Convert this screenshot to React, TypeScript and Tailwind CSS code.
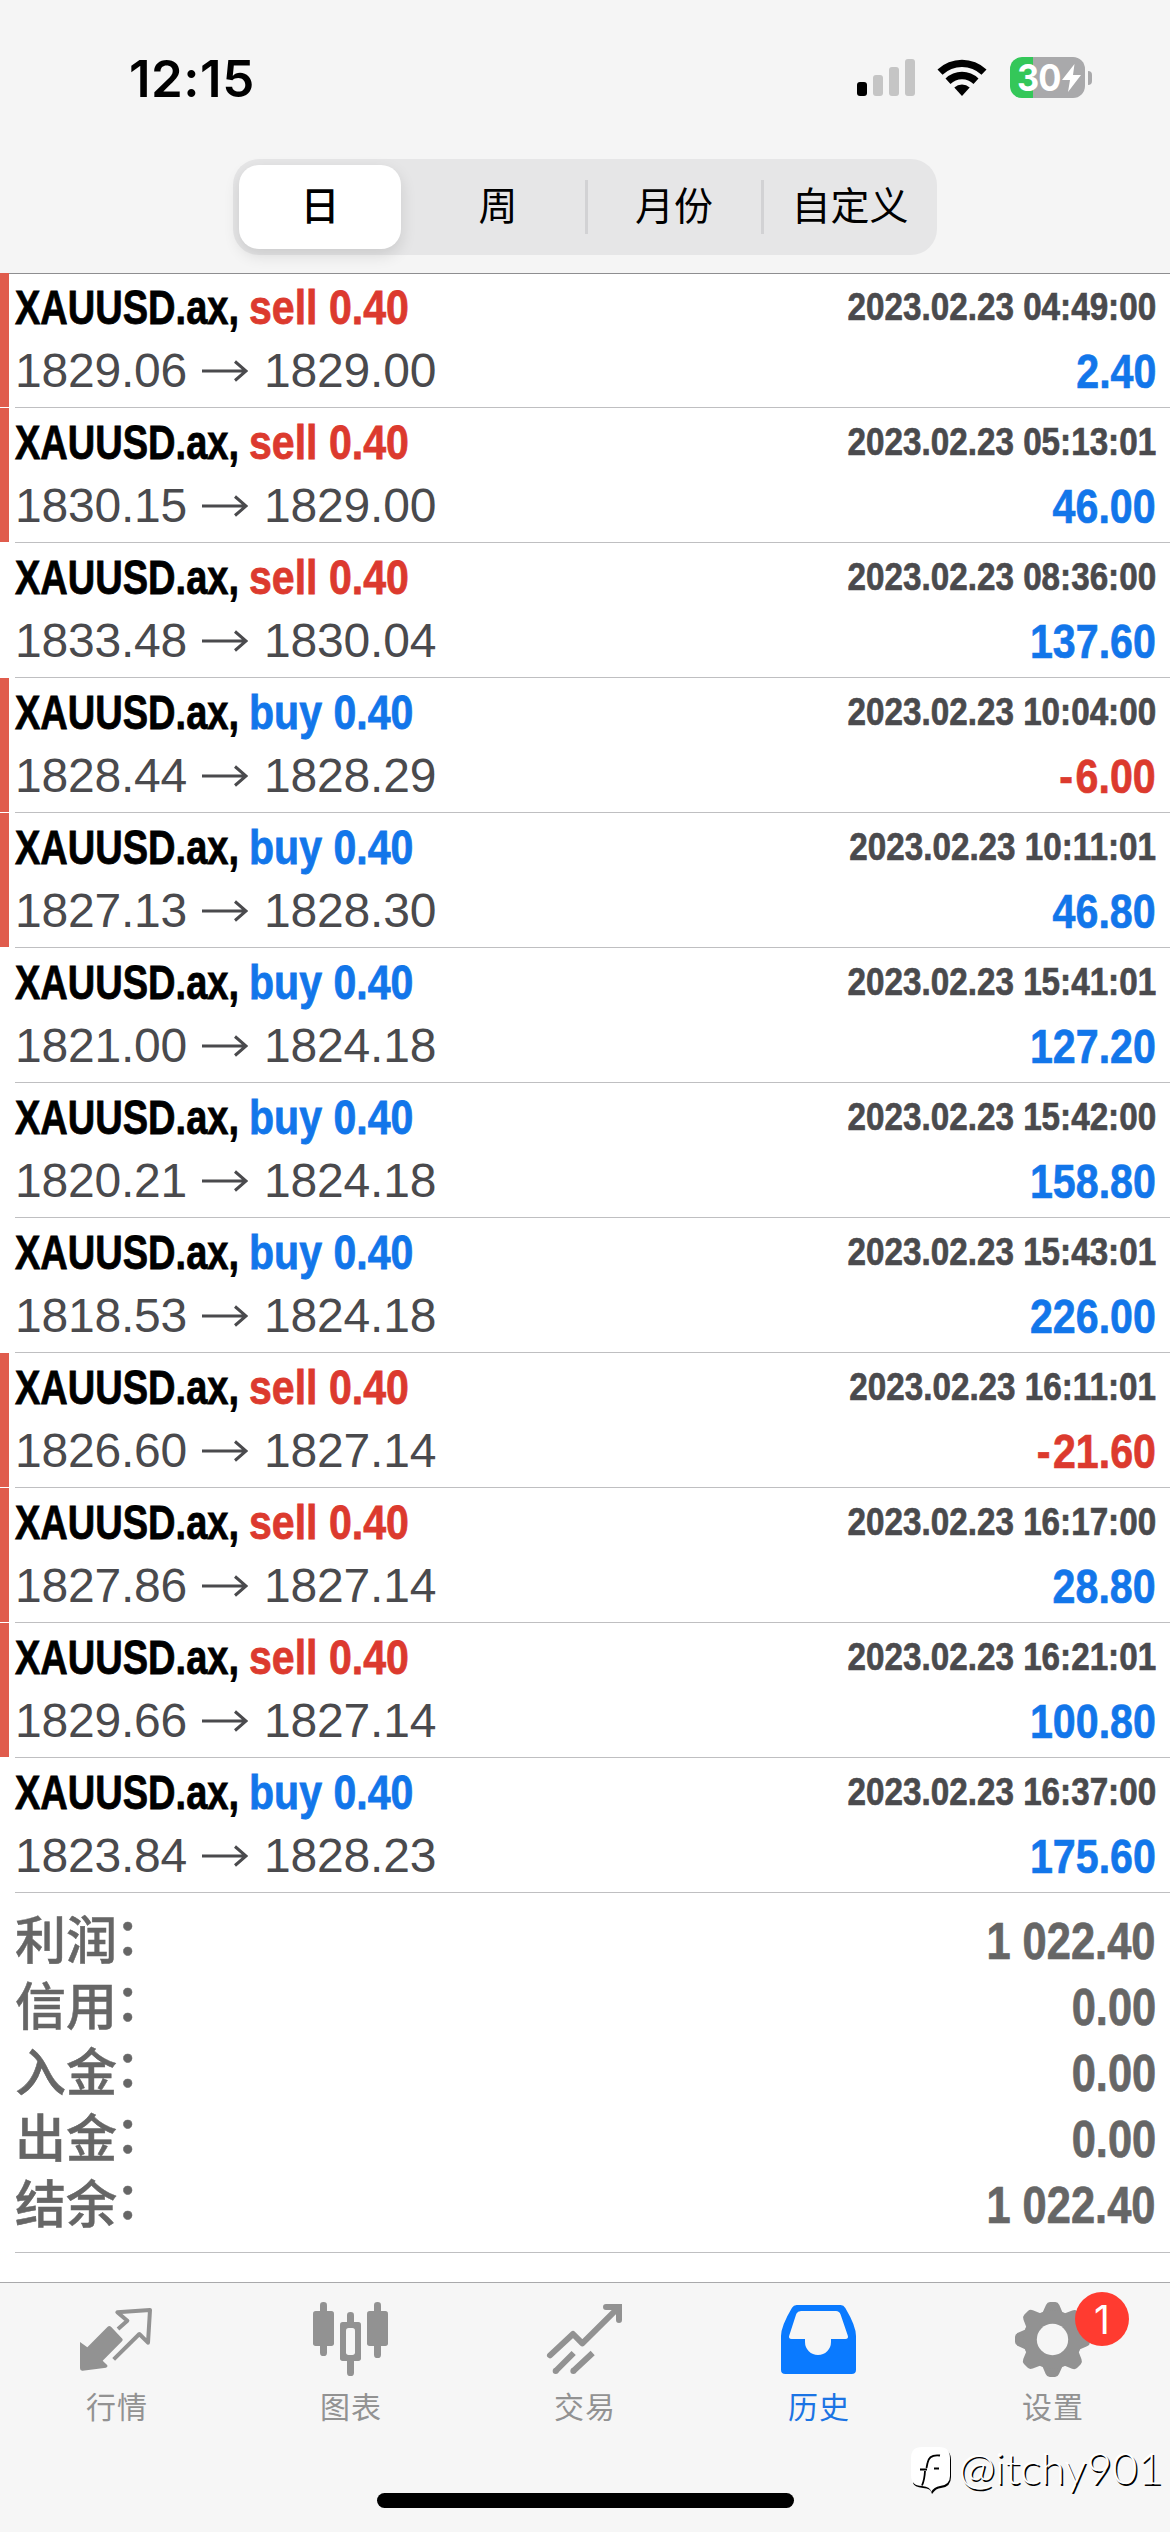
import React from 'react';

type Deal = {
  side: 'sell' | 'buy';
  open: string;
  close: string;
  time: string;
  profit: string;
  marked?: boolean;
};

const deals: Deal[] = [
  { side: 'sell', open: '1829.06', close: '1829.00', time: '2023.02.23 04:49:00', profit: '2.40', marked: true },
  { side: 'sell', open: '1830.15', close: '1829.00', time: '2023.02.23 05:13:01', profit: '46.00', marked: true },
  { side: 'sell', open: '1833.48', close: '1830.04', time: '2023.02.23 08:36:00', profit: '137.60' },
  { side: 'buy', open: '1828.44', close: '1828.29', time: '2023.02.23 10:04:00', profit: '-6.00', marked: true },
  { side: 'buy', open: '1827.13', close: '1828.30', time: '2023.02.23 10:11:01', profit: '46.80', marked: true },
  { side: 'buy', open: '1821.00', close: '1824.18', time: '2023.02.23 15:41:01', profit: '127.20' },
  { side: 'buy', open: '1820.21', close: '1824.18', time: '2023.02.23 15:42:00', profit: '158.80' },
  { side: 'buy', open: '1818.53', close: '1824.18', time: '2023.02.23 15:43:01', profit: '226.00' },
  { side: 'sell', open: '1826.60', close: '1827.14', time: '2023.02.23 16:11:01', profit: '-21.60', marked: true },
  { side: 'sell', open: '1827.86', close: '1827.14', time: '2023.02.23 16:17:00', profit: '28.80', marked: true },
  { side: 'sell', open: '1829.66', close: '1827.14', time: '2023.02.23 16:21:01', profit: '100.80', marked: true },
  { side: 'buy', open: '1823.84', close: '1828.23', time: '2023.02.23 16:37:00', profit: '175.60' },
];

const totals = [
  { label: '利润', value: '1 022.40' },
  { label: '信用', value: '0.00' },
  { label: '入金', value: '0.00' },
  { label: '出金', value: '0.00' },
  { label: '结余', value: '1 022.40' },
];

const periods = ['日', '周', '月份', '自定义'];

const StatusBar = () => (
  <div className="flex h-[159px] items-start justify-between pl-[129px] pr-[78px]">
    <span className="mt-[48px] font-['Inter',sans-serif] text-[51px] font-semibold leading-[62px] tracking-[0.5px] text-black">12:15</span>
    <div className="mt-[57px] flex items-start">
      <svg className="mr-[22px] mt-[2px]" width="58" height="37" viewBox="0 0 58 37">
        <rect x="0" y="23" width="10" height="14" rx="3" fill="#000" />
        <rect x="16" y="16" width="10" height="21" rx="3" fill="#c5c5c5" />
        <rect x="32" y="8" width="10" height="29" rx="3" fill="#c5c5c5" />
        <rect x="48" y="0" width="10" height="37" rx="3" fill="#c5c5c5" />
      </svg>
      <svg className="mr-[23px] mt-[2px]" width="50" height="37" viewBox="0 0 50 37">
        <path d="M0.5 10.500a35.500 35.500 0 0 1 49 0L44.500 15.800a28.500 28.500 0 0 0-39 0z" fill="#000" />
        <path d="M8.500 19.500a23.700 23.700 0 0 1 33 0l-5 5.400a16.500 16.500 0 0 0-23 0z" fill="#000" />
        <path d="M17.3 28.6a11.4 11.4 0 0 1 15.4 0L25 37z" fill="#000" />
      </svg>
      <div className="flex items-center">
        <div className="relative flex h-[41px] w-[75px] items-center rounded-[12px] bg-[linear-gradient(90deg,#34c759_23px,#a9a9ab_23px)] pl-[7px]">
          <span className="origin-left scale-x-[0.93] font-['Inter',sans-serif] text-[37px] font-bold leading-[41px] tracking-[-1px] text-white">30</span>
          <svg className="absolute left-[52px] top-[7px]" width="19" height="28" viewBox="0 0 19 28">
            <path d="M12.5 0L0 16h8L6 28 19 11h-8z" fill="#fff" />
          </svg>
        </div>
        <div className="ml-[3px] h-[14px] w-[4px] rounded-r-full bg-[#a9a9ab]" />
      </div>
    </div>
  </div>
);

const PeriodTabs = () => (
  <div className="mx-auto flex h-24 w-[704px] items-center rounded-[26px] bg-[#e6e6e7]">
    {periods.map((period, i) => (
      <div key={period} className="flex h-full flex-1 items-center">
        <div
          className={
            i === 0
              ? 'ml-[6px] flex h-[84px] w-[162px] items-center justify-center rounded-[20px] bg-white text-[39px] font-medium text-black shadow-[0_6px_16px_rgba(0,0,0,0.12)]'
              : 'flex flex-1 items-center justify-center pl-[2px] text-[39px] text-black'
          }
        >
          {period}
        </div>
        {(i === 1 || i === 2) && <div className="-mr-[3px] h-[54px] w-[3px] bg-[#d2d2d4]" />}
      </div>
    ))}
  </div>
);

const DealRow = ({ deal }: { deal: Deal }) => (
  <div className="flex h-[135px]">
    <div className={`h-[134px] w-[9px] ${deal.marked ? 'bg-[#e05c4d]' : ''}`} />
    <div className="ml-[6px] flex flex-1 justify-between border-b border-[#bfbfc1] pr-[14px]">
      <div className="pt-[3px]">
        <div className="flex h-[62px] whitespace-nowrap text-[49px] font-bold leading-[62px] [-webkit-text-stroke:0.8px]">
          <div className="w-[234px]">
            <span className="inline-block origin-left scale-x-[0.776] text-black">XAUUSD.ax,</span>
          </div>
          <span className={`inline-block origin-left scale-x-[0.838] ${deal.side === 'sell' ? 'text-[#dc3a2e]' : 'text-[#1276ea]'}`}>
            {deal.side} 0.40
          </span>
        </div>
        <div className="mt-[2px] flex h-[62px] items-center text-[48px] leading-[62px] tracking-[-0.2px] text-[#4a4a4d]">
          <span>{deal.open}</span>
          <svg className="ml-[15px] mr-[16px]" width="46" height="22" viewBox="0 0 46 22" fill="none" stroke="#4a4a4d" strokeWidth="3">
            <path d="M0 11h44M33 1.500l11 9.500l-11 9.500" />
          </svg>
          <span>{deal.close}</span>
        </div>
      </div>
      <div className="flex flex-col items-end whitespace-nowrap pt-[3px] font-bold [-webkit-text-stroke:0.7px]">
        <span className="origin-right scale-x-[0.852] text-[39px] leading-[62px] text-[#4a4a4d]">{deal.time}</span>
        <span className={`mt-[2px] origin-right scale-x-[0.84] text-[49px] leading-[62px] ${deal.profit.startsWith('-') ? 'text-[#dc3a2e]' : 'text-[#1276ea]'}`}>
          {deal.profit.startsWith('-') ? (
            <>
              <span className="mr-[3px]">-</span>
              {deal.profit.slice(1)}
            </>
          ) : (
            deal.profit
          )}
        </span>
      </div>
    </div>
  </div>
);

const Totals = () => (
  <div className="ml-[15px] h-[360px] border-b border-[#bfbfc1] pr-[14px] pt-[16px] font-bold text-[#666]">
    {totals.map(({ label, value }) => (
      <div key={label} className="flex h-[66px] items-center justify-between">
        <span className="text-[51px] font-medium leading-[66px] [-webkit-text-stroke:0.5px]">
          {label}
          <span className="relative -left-[2px] -top-[4px]">：</span>
        </span>
        <span className="origin-right scale-x-[0.852] text-[51px] leading-[66px] [-webkit-text-stroke:0.7px]">{value}</span>
      </div>
    ))}
  </div>
);

const QuotesIcon = () => (
  <svg width="86" height="84" viewBox="102 105 258 252">
    <path d="M120 246L142 262L203 200Q208 196 213 200L247 236Q250 240 246 244L188 302L202 316Q204 321 198 323L128 332Q120 333 120 325z" fill="#929292" />
    <path d="M234 207L262 182L232 157L330 150L324 248L298 222L221 298" fill="none" stroke="#929292" strokeWidth="12" strokeLinejoin="round" />
  </svg>
);

const ChartIcon = () => (
  <svg width="86" height="84" viewBox="804 105 258 252" fill="#929292">
    <rect x="840" y="126" width="21" height="162" rx="10" />
    <rect x="819" y="153" width="63" height="105" rx="8" />
    <rect x="1002" y="126" width="21" height="168" rx="10" />
    <rect x="981" y="153" width="63" height="105" rx="8" />
    <rect x="921" y="156" width="21" height="192" rx="10" />
    <rect x="900" y="186" width="63" height="117" rx="8" />
    <rect x="918" y="204" width="27" height="81" rx="8" fill="#f6f6f6" />
  </svg>
);

const TradeIcon = () => (
  <svg width="86" height="84" viewBox="126 105 258 252" fill="none" stroke="#929292" strokeWidth="18">
    <path d="M150 286L219 222L247 250L352 146" strokeLinecap="round" strokeLinejoin="round" />
    <path d="M318 141H357V180" strokeLinecap="round" />
    <path d="M167 333L221 279M220 333L278 279" />
    <path d="M167 333h.1M220 333h.1" strokeLinecap="round" />
    <path d="M348 132h18v18z" fill="#929292" stroke="none" />
  </svg>
);

const HistoryIcon = () => (
  <svg width="86" height="84" viewBox="828 105 258 252">
    <path
      fillRule="evenodd"
      fill="#0a7aff"
      d="M890 135H1022Q1031 135 1036 144Q1068 198 1068 228V329Q1068 342 1055 342H856Q843 342 843 329V228Q843 198 876 143Q881 135 890 135zM903 153Q893 153 889 161L868 226Q864 237 875 237H915V246A39 39 0 0 0 993 246V237H1036Q1047 237 1043 226L1022 164Q1018 153 1008 153z"
    />
  </svg>
);

const tooth = 'M484 166L498 135Q502 126 510 126H526Q534 126 538 135L551 166z';

const SettingsIcon = () => (
  <svg width="86" height="84" viewBox="390 105 258 252" fill="#929292">
    {[0, 45, 90, 135, 180, 225, 270, 315].map((angle) => (
      <path key={angle} d={tooth} transform={`rotate(${angle} 517.500 238.500)`} />
    ))}
    <circle cx="517.5" cy="238.5" r="88" />
    <circle cx="517.5" cy="238.5" r="47" fill="#f6f6f6" />
  </svg>
);

const tabs = [
  { label: '行情', icon: <QuotesIcon /> },
  { label: '图表', icon: <ChartIcon /> },
  { label: '交易', icon: <TradeIcon /> },
  { label: '历史', icon: <HistoryIcon />, active: true },
  { label: '设置', icon: <SettingsIcon />, badge: '1' },
];

const TabBar = () => (
  <nav className="relative h-[250px] border-t border-[#a9a9ab] bg-[#f6f6f6]">
    <div className="flex">
      {tabs.map((tab) => (
        <div key={tab.label} className="relative flex flex-1 flex-col items-center pt-[12px]">
          {tab.icon}
          <span className={`mt-[9px] text-[30px] leading-[40px] tracking-[1px] ${tab.active ? 'text-[#1b74e4]' : 'text-[#929292]'}`}>{tab.label}</span>
          {tab.badge && (
            <span className="absolute left-[139px] top-[9px] flex size-[54px] items-center justify-center rounded-full bg-[#ff3b30] font-['Inter',sans-serif] text-[39px] leading-none text-white">
              {tab.badge}
            </span>
          )}
        </div>
      ))}
    </div>
    <div className="absolute bottom-[24px] left-[377px] h-[15px] w-[417px] rounded-full bg-black" />
    {/* author handle over the bar */}
    <div className="absolute right-[7px] top-[155px] flex items-center">
      <svg className="mr-[6px] mt-[8px]" width="42" height="50" viewBox="0 0 42 50">
        <path d="M12 3H29Q40 3 40 14V31Q40 41 30 42Q25 42 21 48Q20 42 12 42Q3 41 2 37V14z" fill="#000" />
        <path d="M11 1H28Q39 1 39 12V30Q39 39 29 40Q23 41 20 46Q20 41 11 40Q0 40 0 29V12Q0 1 11 1z" fill="#fff" />
        <path d="M29 9.500Q18 8 16.500 17L15.500 22M9 23.500H16M14 25Q13.500 34 11 39.500M23 22.500H28" fill="none" stroke="#000" strokeWidth="1.8" />
      </svg>
      <span className="font-['Lato',sans-serif] text-[44px] font-light leading-[54px] text-white [text-shadow:1.5px_1.5px_0_#000]">@itchy901</span>
    </div>
  </nav>
);

const App = () => {
  return (
    <div className="flex h-[2532px] w-[1170px] flex-col overflow-hidden bg-white font-['Liberation_Sans','Noto_Sans_CJK_SC',sans-serif]">
      <header className="h-[274px] shrink-0 border-b border-[#8e8e90] bg-[#f5f5f5]">
        <StatusBar />
        <PeriodTabs />
      </header>
      <main className="-mt-px flex-1">
        {deals.map((deal) => (
          <DealRow key={deal.time} deal={deal} />
        ))}
        <Totals />
      </main>
      <TabBar />
    </div>
  );
};

export default App;
